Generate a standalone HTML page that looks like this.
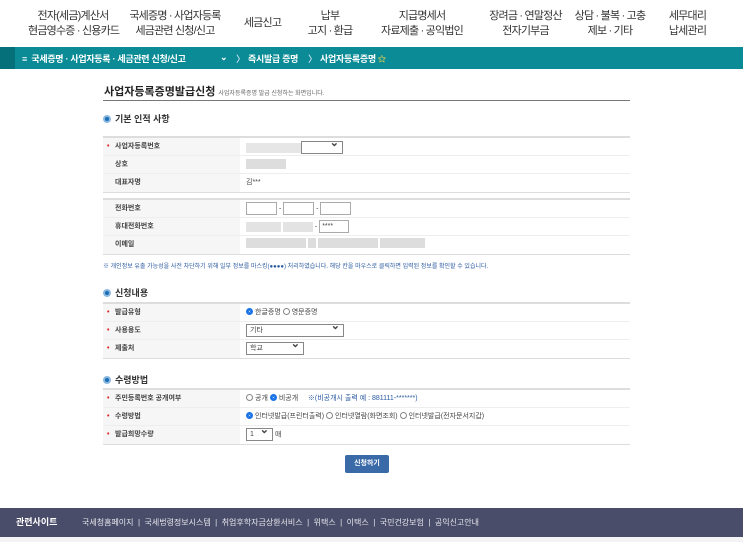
<!DOCTYPE html>
<html><head><meta charset="utf-8"><style>
*{margin:0;padding:0;box-sizing:border-box}
body{width:743px;height:542px;overflow:hidden;background:#fff;font-family:"Liberation Sans","Noto Sans CJK KR",sans-serif;color:#333;position:relative}
.a{position:absolute}
.menu{font-size:11px;color:#333;text-align:center;line-height:15px;top:9px;white-space:nowrap;letter-spacing:-0.8px}
.nav{top:47px;left:0;width:743px;height:22px;background:#0a8b96}
.nav span{position:absolute;top:5px;font-size:9px;color:#fff;font-weight:bold;white-space:nowrap;letter-spacing:-0.3px}
.sec{font-size:9px;font-weight:bold;color:#333}
.dot{display:inline-block;width:8px;height:8px;border-radius:50%;background:#1a6fb5;border:2px solid #8bb8e0;vertical-align:-1px;margin-right:4px}
.tb{left:103px;width:527px;border-top:2px solid #ddd;border-bottom:1px solid #ddd}
.row{height:18px;border-bottom:1px solid #eee;position:relative;font-size:7px;white-space:nowrap}
.row:last-child{border-bottom:none}
.lb{position:absolute;left:0;top:0;width:137px;height:100%;background:#f6f6f6;padding-left:12px;line-height:17px;font-weight:bold;color:#444}
.req{color:#d22;position:absolute;left:4px}
.v{position:absolute;left:143px;top:3px;line-height:12px;color:#444}
.in{display:inline-block;height:13px;border:1px solid #aaa;background:#fff;vertical-align:middle}
.sel{display:inline-block;height:13px;border:1px solid #888;background:#fff;vertical-align:middle;position:relative;font-size:7px;padding-left:3px;line-height:11px}
.sel:after{content:"⌄";position:absolute;right:3px;top:-4px;font-size:11px;font-weight:bold}
.blur{display:inline-block;height:10px;background:#ddd;vertical-align:middle}
.rd{display:inline-block;width:7px;height:7px;border-radius:50%;border:1px solid #888;vertical-align:-1px;margin-right:2px}
.rd.on{border:2px solid #1a73e8;background:#fff;box-shadow:inset 0 0 0 1px #1a73e8}
</style></head><body>
<div class="a menu" style="left:28px;width:90px">전자(세금)계산서<br>현금영수증 · 신용카드</div>
<div class="a menu" style="left:125px;width:100px">국세증명 · 사업자등록<br>세금관련 신청/신고</div>
<div class="a menu" style="left:240px;width:45px;top:16px">세금신고</div>
<div class="a menu" style="left:300px;width:60px">납부<br>고지 · 환급</div>
<div class="a menu" style="left:372px;width:100px">지급명세서<br>자료제출 · 공익법인</div>
<div class="a menu" style="left:478px;width:95px">장려금 · 연말정산<br>전자기부금</div>
<div class="a menu" style="left:570px;width:80px">상담 · 불복 · 고충<br>제보 · 기타</div>
<div class="a menu" style="left:660px;width:55px">세무대리<br>납세관리</div>
<div class="a nav"><div class="a" style="left:0;top:0;width:15px;height:22px;background:#06707a"></div>
<span style="left:22px">≡&nbsp; 국세증명 · 사업자등록 · 세금관련 신청/신고</span>
<span style="left:220px">⌄</span><span style="left:236px;color:#bde">〉</span>
<span style="left:248px">즉시발급 증명</span><span style="left:308px;color:#bde">〉</span>
<span style="left:320px">사업자등록증명 <span style="color:#ffd84a;position:static">✩</span></span></div>

<div class="a" style="left:104px;top:83px;font-size:11px;font-weight:bold;color:#222;white-space:nowrap">사업자등록증명발급신청 <span style="font-size:6px;font-weight:normal;color:#666">사업자등록증명 발급 신청하는 화면입니다.</span></div>
<div class="a" style="left:103px;top:100px;width:527px;border-top:1px solid #777"></div>

<div class="a sec" style="left:103px;top:112px"><span class="dot"></span>기본 인적 사항</div>
<div class="a tb" style="top:136px">
<div class="row"><div class="lb"><span class="req">•</span>사업자등록번호</div><div class="v"><span class="blur" style="width:55px;background:#e6e6e6"></span><span class="sel" style="width:42px"></span></div></div>
<div class="row"><div class="lb">상호</div><div class="v"><span class="blur" style="width:40px"></span></div></div>
<div class="row"><div class="lb">대표자명</div><div class="v">김***</div></div>
</div>
<div class="a tb" style="top:198px">
<div class="row"><div class="lb">전화번호</div><div class="v" style="top:2px"><span class="in" style="width:31px"></span> - <span class="in" style="width:31px"></span> - <span class="in" style="width:31px"></span></div></div>
<div class="row"><div class="lb">휴대전화번호</div><div class="v" style="top:2px"><span class="blur" style="width:35px;background:#e3e3e3"></span> <span class="blur" style="width:30px;background:#e3e3e3"></span> - <span class="in" style="width:30px;font-size:7px;line-height:11px;padding-left:2px">****</span></div></div>
<div class="row"><div class="lb">이메일</div><div class="v" style="top:2px"><span class="blur" style="width:60px"></span> <span class="blur" style="width:8px"></span> <span class="blur" style="width:60px"></span> <span class="blur" style="width:45px"></span></div></div>
</div>
<div class="a" style="left:103px;top:261px;font-size:6px;color:#2a5aa0;white-space:nowrap">※ 개인정보 유출 가능성을 사전 차단하기 위해 일부 정보를 마스킹(●●●●) 처리하였습니다. 해당 칸을 마우스로 클릭하면 입력된 정보를 확인할 수 있습니다.</div>

<div class="a sec" style="left:103px;top:286px"><span class="dot"></span>신청내용</div>
<div class="a tb" style="top:302px">
<div class="row"><div class="lb"><span class="req">•</span>발급유형</div><div class="v"><span class="rd on"></span>한글증명 <span class="rd"></span>영문증명</div></div>
<div class="row"><div class="lb"><span class="req">•</span>사용용도</div><div class="v" style="top:2px"><span class="sel" style="width:98px">기타</span></div></div>
<div class="row"><div class="lb"><span class="req">•</span>제출처</div><div class="v" style="top:2px"><span class="sel" style="width:58px">학교</span></div></div>
</div>

<div class="a sec" style="left:103px;top:373px"><span class="dot"></span>수령방법</div>
<div class="a tb" style="top:388px">
<div class="row"><div class="lb"><span class="req">•</span>주민등록번호 공개여부</div><div class="v"><span class="rd"></span>공개 <span class="rd on"></span>비공개 &nbsp;&nbsp;&nbsp; <span style="color:#2a5aa0">※(비공개시 출력 예 : 881111-*******)</span></div></div>
<div class="row"><div class="lb"><span class="req">•</span>수령방법</div><div class="v"><span class="rd on"></span>인터넷발급(프린터출력) <span class="rd"></span>인터넷열람(화면조회) <span class="rd"></span>인터넷발급(전자문서지갑)</div></div>
<div class="row"><div class="lb"><span class="req">•</span>발급희망수량</div><div class="v" style="top:2px"><span class="sel" style="width:27px">1</span> 매</div></div>
</div>

<div class="a" style="left:345px;top:455px;width:44px;height:18px;background:#3b6aa9;border-radius:2px;color:#fff;font-size:7px;font-weight:bold;text-align:center;line-height:18px">신청하기</div>

<div class="a" style="left:0;top:508px;width:743px;height:29px;background:#4a4d69;color:#fff;font-size:8px;line-height:29px;white-space:nowrap">
<span class="a" style="left:16px;font-weight:bold;font-size:9px">관련사이트</span>
<span class="a" style="left:82px;color:#e6e6ee">국세청홈페이지 &nbsp;|&nbsp; 국세법령정보시스템 &nbsp;|&nbsp; 취업후학자금상환서비스 &nbsp;|&nbsp; 위택스 &nbsp;|&nbsp; 이택스 &nbsp;|&nbsp; 국민건강보험 &nbsp;|&nbsp; 공익신고안내</span></div>
<div class="a" style="left:0;top:537px;width:743px;height:5px;background:#f4f4f6"></div>
</body></html>
